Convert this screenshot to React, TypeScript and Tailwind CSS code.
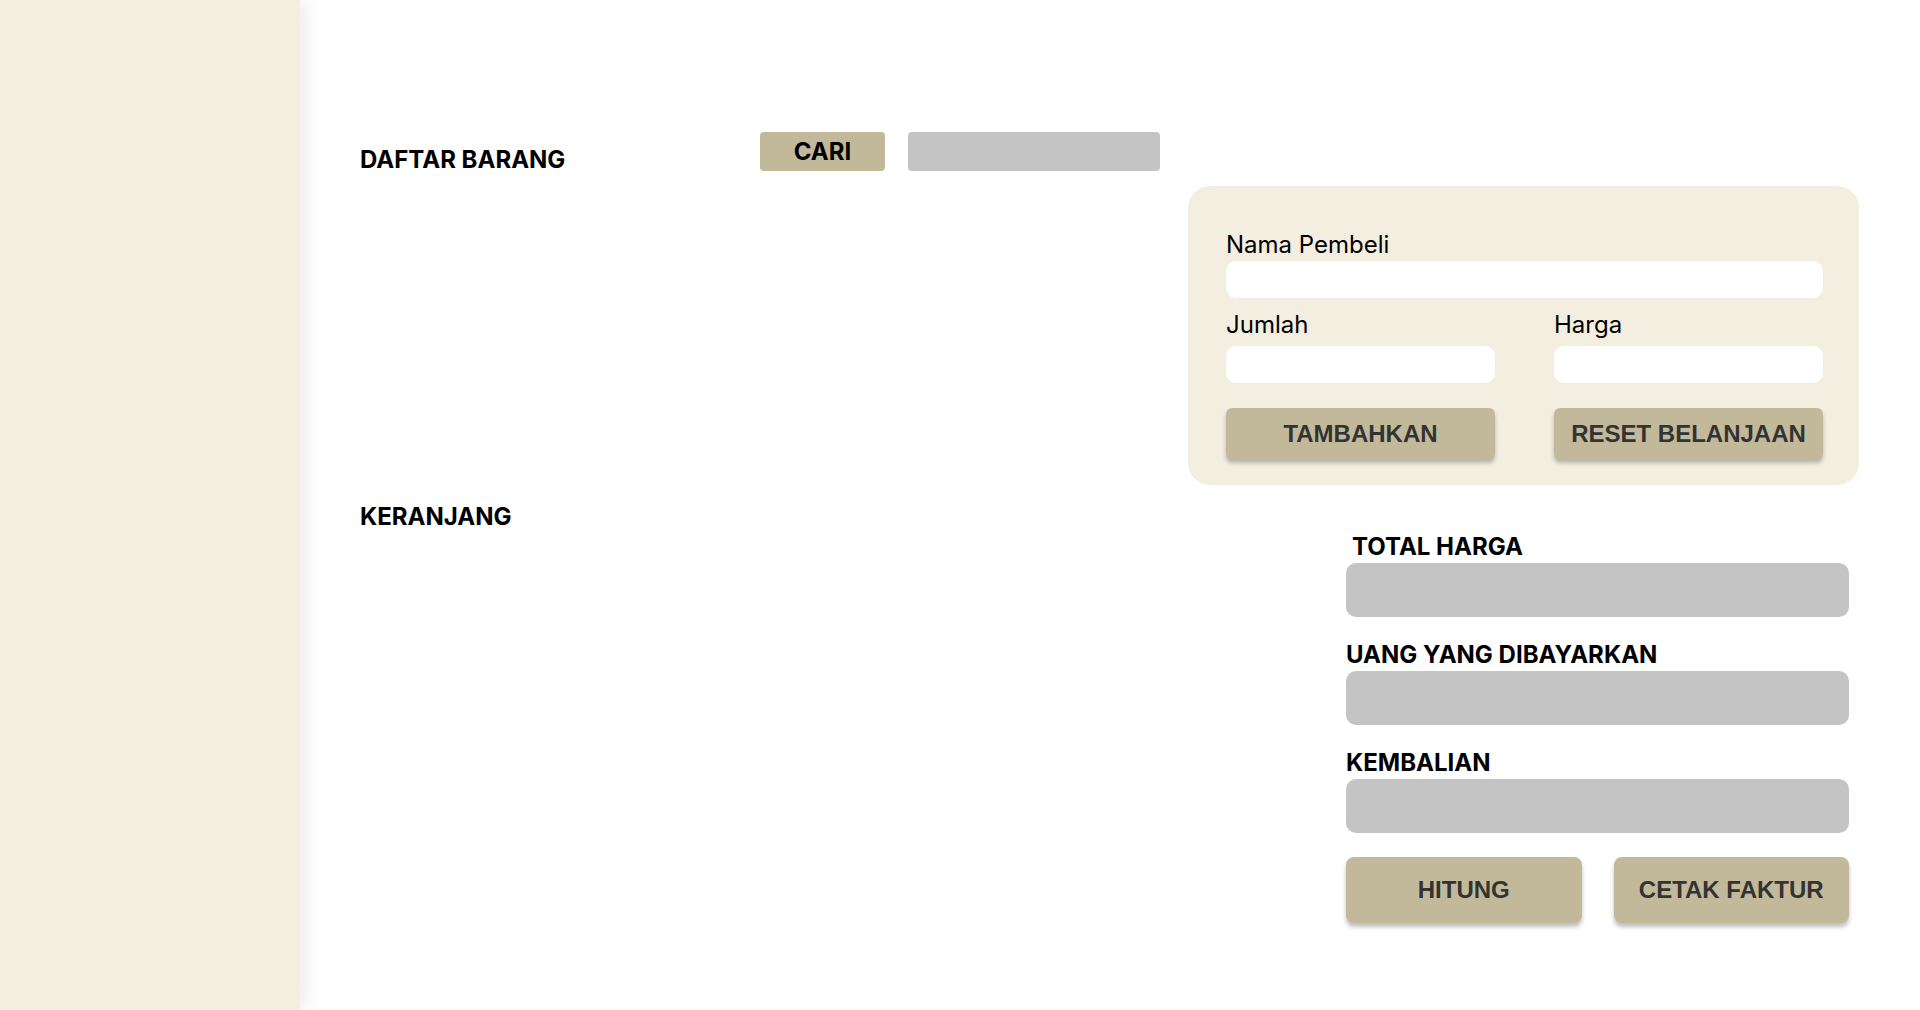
import React from 'react';

const INTER = "font-['Inter','Noto_Sans',sans-serif]";
const ARIAL = "font-['Liberation_Sans','Arial',sans-serif]";

function Field({ label, gap = 'mt-[2px]' }: { label: string; gap?: string }) {
  return (
    <div className="flex flex-col">
      <label className="text-[24px] leading-[29px] text-black">{label}</label>
      <input className={`${gap} h-[37px] w-full rounded-[10px] bg-white outline-none`} />
    </div>
  );
}

function SummaryRow({ label, indent = false }: { label: string; indent?: boolean }) {
  return (
    <div className="flex flex-col">
      <span className={`text-[24px] font-bold leading-[29px] text-black ${indent ? 'pl-[6px]' : ''}`}>
        {label}
      </span>
      <div className="mt-[2px] h-[54px] w-full rounded-[10px] bg-[#c4c4c4]" />
    </div>
  );
}

export default function App() {
  return (
    <div className={`flex min-h-[1010px] w-full bg-white ${INTER}`}>
      {/* Sidebar */}
      <aside className="relative z-10 w-[300px] shrink-0 bg-[#f4eee1] shadow-[6px_0_18px_rgba(0,0,0,0.08)]" />

      <main className="flex flex-1 pl-[60px] pr-[61px] pt-[132px]">
        {/* Kiri */}
        <div className="flex w-[828px] flex-col">
          <div className="flex items-start">
            <h2 className="mt-[13px] w-[400px] text-[24px] font-bold leading-[29px] text-black">DAFTAR BARANG</h2>
            <button className="h-[39px] w-[125px] rounded-[4px] bg-[#c2b99b] text-[24px] font-bold text-black">
              CARI
            </button>
            <input className="ml-[23px] h-[39px] w-[252px] rounded-[4px] bg-[#c4c4c4] outline-none" />
          </div>
          <h2 className="mt-[328px] text-[24px] font-bold leading-[29px] text-black">KERANJANG</h2>
        </div>

        {/* Kanan */}
        <div className="flex flex-1 flex-col">
          <section className="mt-[54px] rounded-[22px] bg-[#f4eee1] pb-[26px] pl-[38px] pr-[36px] pt-[44px]">
            <Field label="Nama Pembeli" />
            <div className="mt-[12px] grid grid-cols-2 gap-x-[59px]">
              <Field label="Jumlah" gap="mt-[7px]" />
              <Field label="Harga" gap="mt-[7px]" />
            </div>
            <div className={`mt-[25px] grid grid-cols-2 gap-x-[59px] ${ARIAL}`}>
              <button className="h-[51px] rounded-[6px] bg-[#c2b99b] text-[24px] font-bold text-[#333333] shadow-[0_4px_4px_rgba(0,0,0,0.25)]">
                TAMBAHKAN
              </button>
              <button className="h-[51px] rounded-[6px] bg-[#c2b99b] text-[24px] font-bold text-[#333333] shadow-[0_4px_4px_rgba(0,0,0,0.25)]">
                RESET BELANJAAN
              </button>
            </div>
          </section>

          <div className="ml-[158px] mr-[10px] mt-[47px] flex flex-col gap-[23px]">
            <SummaryRow label="TOTAL HARGA" indent />
            <SummaryRow label="UANG YANG DIBAYARKAN" />
            <SummaryRow label="KEMBALIAN" />
            <div className={`mt-[1px] grid grid-cols-2 gap-x-[32px] ${ARIAL}`}>
              <button className="h-[66px] rounded-[8px] bg-[#c2b99b] text-[24px] font-bold text-[#333333] shadow-[0_4px_4px_rgba(0,0,0,0.25)]">
                HITUNG
              </button>
              <button className="h-[66px] rounded-[8px] bg-[#c2b99b] text-[24px] font-bold text-[#333333] shadow-[0_4px_4px_rgba(0,0,0,0.25)]">
                CETAK FAKTUR
              </button>
            </div>
          </div>
        </div>
      </main>
    </div>
  );
}
